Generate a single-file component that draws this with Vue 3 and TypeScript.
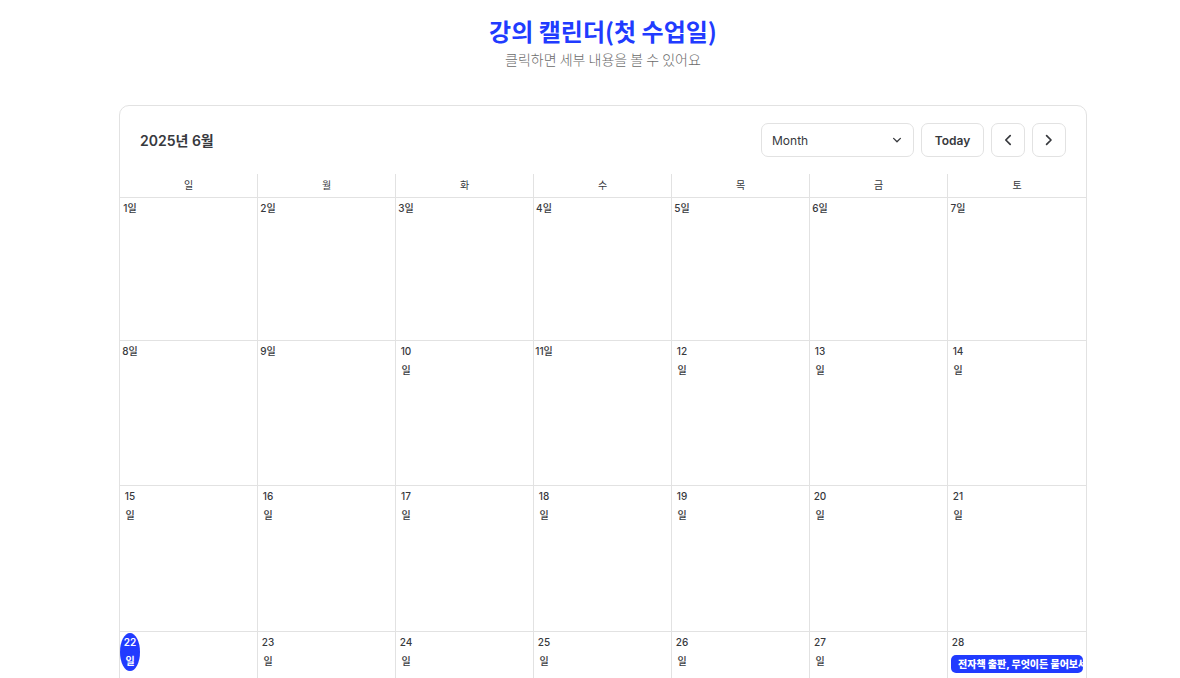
<script setup lang="ts">
import { ref } from 'vue'

interface CalendarDay {
  day: number
  today?: boolean
  wrap?: boolean
  event?: string
}

const view = ref<string>('Month')
const weekdays: string[] = ['일', '월', '화', '수', '목', '금', '토']
const today = 22
const events: Record<number, string> = { 28: '전자책 출판, 무엇이든 물어보세요' }

const weeks: CalendarDay[][] = [0, 1, 2, 3].map((week) =>
  weekdays.map((_, i) => {
    const day = week * 7 + i + 1
    return { day, today: day === today, wrap: day >= 10 && day !== 11, event: events[day] }
  }),
)
</script>

<template>
  <main class="page">
    <header class="intro">
      <h1>강의 캘린더(첫 수업일)</h1>
      <p>클릭하면 세부 내용을 볼 수 있어요</p>
    </header>

    <section class="calendar">
      <div class="toolbar">
        <h2>2025년 6월</h2>
        <div class="controls">
          <div class="picker">
            <select v-model="view" aria-label="View">
              <option>Month</option>
            </select>
            <svg viewBox="0 0 10 10" aria-hidden="true"><path d="M1.6 3.4 5 6.8 8.4 3.4" /></svg>
          </div>
          <button type="button" class="today-button">Today</button>
          <button type="button" class="arrow" aria-label="Previous month">
            <svg viewBox="0 0 12 12" aria-hidden="true"><path d="M8.2 1.6 3.8 6 8.2 10.4" /></svg>
          </button>
          <button type="button" class="arrow" aria-label="Next month">
            <svg viewBox="0 0 12 12" aria-hidden="true"><path d="M3.6 1.6 8 6 3.6 10.4" /></svg>
          </button>
        </div>
      </div>

      <table>
        <thead>
          <tr>
            <th v-for="name in weekdays" :key="name" scope="col">{{ name }}</th>
          </tr>
        </thead>
        <tbody>
          <tr v-for="(week, w) in weeks" :key="w">
            <td v-for="cell in week" :key="cell.day">
              <span v-if="cell.event" class="date">{{ cell.day }}</span>
              <span v-else class="date" :class="{ wrap: cell.wrap, current: cell.today }">
                <span>{{ cell.day }}</span><span>일</span>
              </span>
              <a v-if="cell.event" href="#" class="event">{{ cell.event }}</a>
            </td>
          </tr>
        </tbody>
      </table>
    </section>
  </main>
</template>

<style>
html,
body {
  background: #fff;
}
</style>

<style scoped>
.page {
  box-sizing: border-box;
  height: 100vh;
  overflow: hidden;
  padding: 15px 93px 0 119px;
  color: #37393d;
  font-family: Inter, 'Noto Sans CJK KR', sans-serif;
}

.intro {
  text-align: center;
  font-family: 'Noto Sans CJK KR', sans-serif;
}

h1 {
  margin: 0;
  color: #213bff;
  font-size: 24px;
  font-weight: 700;
  line-height: 32px;
}

.intro p {
  margin: 0 0 33px;
  color: #6b6b6b;
  font-size: 14px;
  font-weight: 300;
  line-height: 25px;
}

.calendar {
  border: 1px solid #e2e2e2;
  border-radius: 10px 10px 0 0;
}

.toolbar {
  display: flex;
  align-items: center;
  justify-content: space-between;
  padding: 17px 20px;
}

h2 {
  margin: 0;
  padding-top: 2px;
  font-size: 14px;
  font-weight: 600;
  line-height: 20px;
}

.controls {
  display: flex;
  gap: 7px;
}

.picker {
  position: relative;
}

select,
button {
  box-sizing: border-box;
  height: 34px;
  margin: 0;
  border: 1px solid #e2e2e2;
  border-radius: 7px;
  background: #fff;
  color: #37393d;
  font-family: inherit;
  font-size: 12px;
}

select {
  display: block;
  width: 153px;
  padding: 0 10px;
  appearance: none;
}

svg {
  fill: none;
  stroke: #37393d;
  stroke-linecap: round;
  stroke-linejoin: round;
}

.picker svg {
  position: absolute;
  top: 12px;
  right: 12px;
  width: 10px;
  height: 10px;
  stroke-width: 1.3;
  pointer-events: none;
}

button {
  display: flex;
  align-items: center;
  justify-content: center;
  padding: 0;
}

.today-button {
  width: 63px;
  font-weight: 600;
}

.arrow {
  width: 34px;
}

.arrow svg {
  width: 12px;
  height: 12px;
  stroke-width: 1.7;
}

table {
  width: 100%;
  border-collapse: separate;
  border-spacing: 0;
  table-layout: fixed;
}

th,
td {
  box-sizing: border-box;
  padding: 0;
  border-right: 1px solid #e2e2e2;
}

th:last-child,
td:last-child {
  border-right: 0;
}

th {
  height: 23px;
  padding-bottom: 2px;
  font-size: 10px;
  font-weight: 400;
  line-height: 20px;
}

td {
  height: 146px;
  border-top: 1px solid #e2e2e2;
  vertical-align: top;
}

tr:nth-child(1) td {
  height: 143px;
}

tr:nth-child(2) td {
  height: 145px;
}

.date {
  display: flex;
  width: 20px;
  margin-top: 1px;
  justify-content: center;
  font-size: 10px;
  font-weight: 500;
  line-height: 19px;
  white-space: nowrap;
}

.wrap {
  flex-direction: column;
  align-items: center;
}

.current {
  border-radius: 50%;
  background: #213bff;
  color: #fff;
  font-weight: 600;
}

.event {
  display: block;
  margin: 3px 3px 0 3px;
  padding-left: 7px;
  overflow: hidden;
  border-radius: 5px;
  background: #213bff;
  color: #fff;
  font-size: 10px;
  font-weight: 800;
  line-height: 18px;
  text-decoration: none;
  white-space: nowrap;
}
</style>
